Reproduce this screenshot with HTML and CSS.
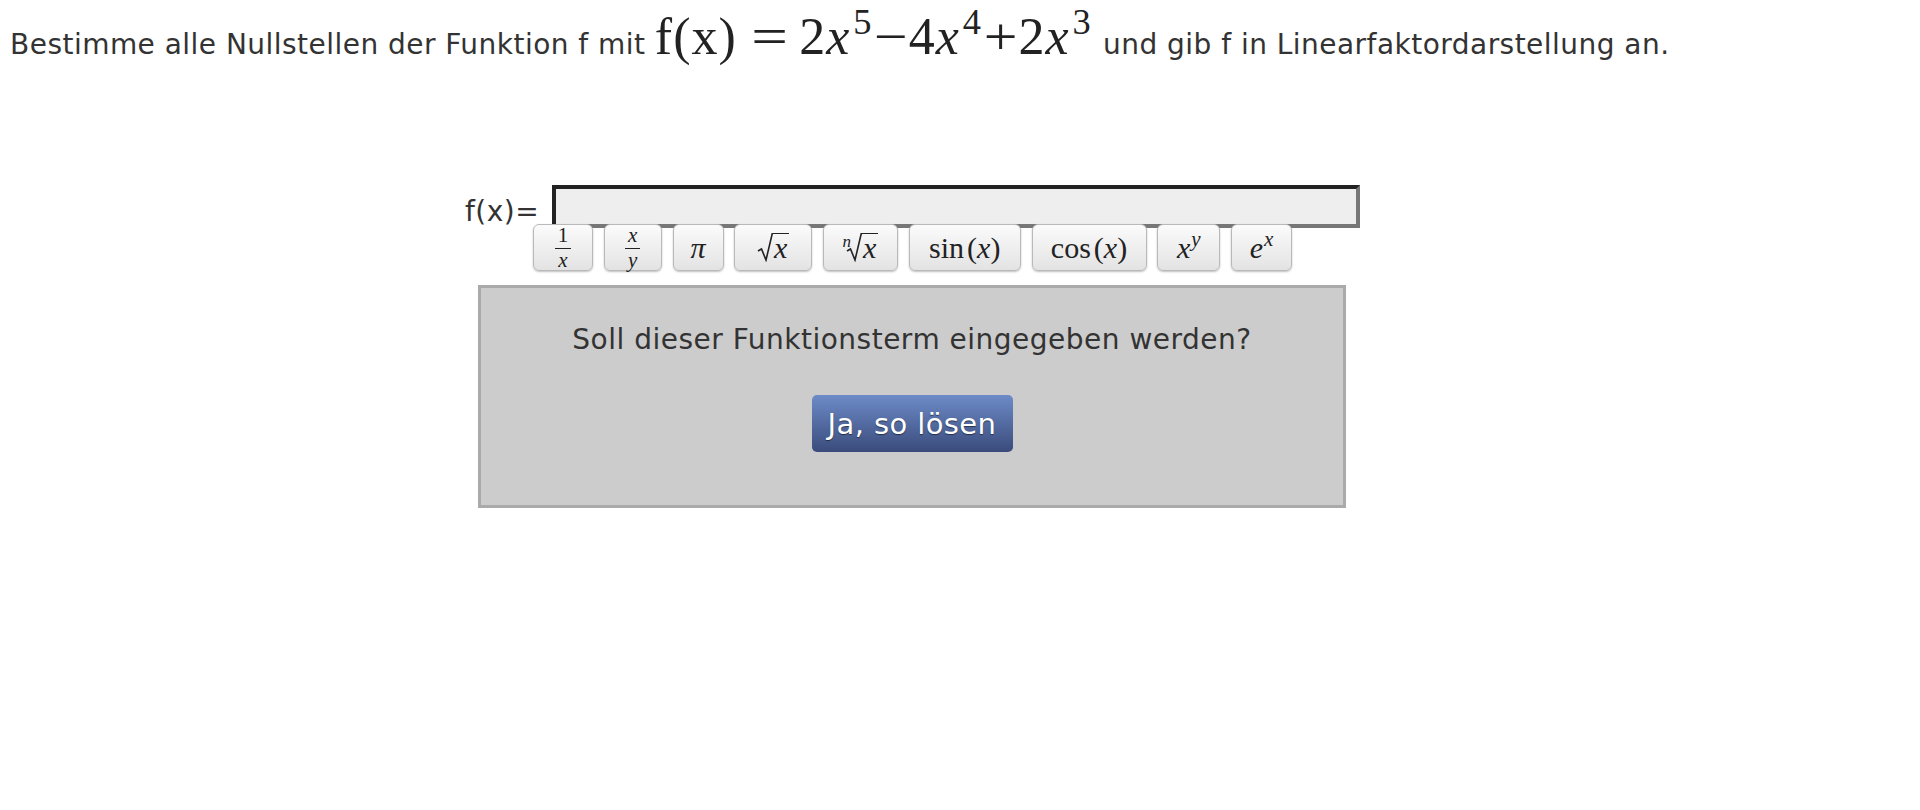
FILE: index.html
```html
<!DOCTYPE html>
<html lang="de">
<head>
<meta charset="utf-8">
<title>Nullstellen</title>
<link rel="stylesheet" href="styles.css">
</head>
<body>
<p class="task">Bestimme alle Nullstellen der Funktion f mit <span class="m hm"><span class="up">f(x)</span><span class="eq">=</span>2<i>x</i><sup>5</sup><span class="op">−</span>4<i>x</i><sup>4</sup><span class="op">+</span>2<i>x</i><sup>3</sup></span> und gib f in Linearfaktordarstellung an.</p>

<div class="solver">
  <div class="entry">
    <label class="fx-label" for="term">f(x)=</label>
    <input class="field" id="term" type="text">
  </div>
  <div class="keys">
    <button class="key key-frac1"><span class="m frac"><span class="num">1</span><span class="den"><i>x</i></span></span></button>
    <button class="key key-fracxy"><span class="m frac"><span class="num"><i>x</i></span><span class="den"><i>y</i></span></span></button>
    <button class="key key-pi"><span class="m"><i>π</i></span></button>
    <button class="key key-sqrt"><span class="m sqrt"><svg class="rad" width="16" height="29" viewBox="0 0 16 29"><path d="M1 18 L4.5 16 L9 27 L15.2 0.8 L16 0.8"/></svg><span class="rad-body"><i>x</i></span></span></button>
    <button class="key key-nroot"><span class="m sqrt"><i class="idx">n</i><svg class="rad" width="16" height="29" viewBox="0 0 16 29"><path d="M1 18 L4.5 16 L9 27 L15.2 0.8 L16 0.8"/></svg><span class="rad-body"><i>x</i></span></span></button>
    <button class="key key-sin"><span class="m">sin<span class="thin"></span>(<i>x</i>)</span></button>
    <button class="key key-cos"><span class="m">cos<span class="thin"></span>(<i>x</i>)</span></button>
    <button class="key key-pow"><span class="m"><i>x</i><sup><i>y</i></sup></span></button>
    <button class="key key-exp"><span class="m"><i>e</i><sup><i>x</i></sup></span></button>
  </div>
  <div class="confirm">
    <p class="confirm-q">Soll dieser Funktionsterm eingegeben werden?</p>
    <button class="solve-btn">Ja, so lösen</button>
  </div>
</div>
</body>
</html>
```

FILE: styles.css
```css
* { box-sizing: border-box; }

body {
  margin: 8px;
  background: #fff;
  color: #333;
  font-family: "DejaVu Sans", Verdana, sans-serif;
}

.task {
  margin: -1px 0 0;
  padding-left: 2px;
  font-size: 28px;
  letter-spacing: 0.47px;
}

.m {
  font-family: "Liberation Serif", "Times New Roman", serif;
  color: #222;
}

.m i { font-style: italic; }

.m sup {
  font-size: 0.7em;
  line-height: 0;
  vertical-align: 0.5em;
}

.hm {
  font-size: 52px;
  letter-spacing: 1px;
}

.hm sup {
  vertical-align: 0.56em;
  margin: 0 2px 0 3px;
}

.eq {
  display: inline-block;
  margin: 0 14px 0 18px;
  transform: scaleX(1.25);
}

.op {
  display: inline-block;
  transform: scaleX(1.15);
  margin: 0 2px;
}

.solver {
  margin: 119px 0 0 457px;
  width: 910px;
}

.entry {
  display: flex;
  align-items: flex-end;
  gap: 13px;
}

.fx-label {
  font-size: 28px;
  line-height: 33px;
  letter-spacing: 0.5px;
}

.field {
  width: 808px;
  height: 43px;
  margin: 0;
  background: #eee;
  border: 4px solid;
  border-color: #222 #777 #777 #222;
  outline: none;
}

.keys {
  display: flex;
  gap: 10.75px;
  margin: -4px 0 0 68px;
  position: relative;
}

.key {
  height: 47px;
  padding: 0;
  display: flex;
  align-items: center;
  justify-content: center;
  border: 1px solid #b9b9b9;
  border-radius: 6px;
  background: linear-gradient(#fbfbfb, #e3e3e3);
  box-shadow: 0 1px 2px rgba(0, 0, 0, 0.25);
  font-size: 30px;
  line-height: 1;
  color: #222;
}

.key-frac1 { width: 60px; }
.key-fracxy { width: 58px; }
.key-pi { width: 51px; }
.key-sqrt { width: 78px; }
.key-nroot { width: 75px; }
.key-sin { width: 112px; }
.key-cos { width: 115px; }
.key-pow { width: 63px; }
.key-exp { width: 61px; }

.key sup {
  vertical-align: 0.55em;
  margin-left: 1px;
}

.frac {
  display: inline-flex;
  flex-direction: column;
  align-items: stretch;
  font-size: 21px;
  text-align: center;
  margin-top: 1px;
}

.frac .num {
  line-height: 23.3px;
  padding: 0 3px;
  border-bottom: 1.5px solid #222;
}

.frac .den {
  line-height: 23.3px;
}

.thin { display: inline-block; width: 0.1em; }

.sqrt {
  display: inline-flex;
  align-items: flex-start;
}

.rad { display: block; }

.rad path {
  fill: none;
  stroke: #222;
  stroke-width: 1.6;
}

.rad-body {
  border-top: 1.6px solid #222;
  line-height: 27px;
  padding: 0 2px 0 1px;
}

.idx {
  font-size: 17px;
  line-height: 17px;
  margin: 0 -5px 0 0;
  position: relative;
}

.confirm {
  margin: 14px 0 0 13px;
  width: 868px;
  height: 223px;
  display: flex;
  flex-direction: column;
  align-items: center;
  background: #ccc;
  border: 3px solid #aaa;
}

.confirm-q {
  margin: 35px 0 0;
  font-size: 28px;
  line-height: 33px;
  letter-spacing: 0.5px;
}

.solve-btn {
  margin-top: 39px;
  width: 201px;
  height: 57px;
  border: 0;
  border-radius: 5px;
  background: linear-gradient(#6d8bc8, #3a4b7b);
  color: #fff;
  font-family: "DejaVu Sans", Verdana, sans-serif;
  font-size: 29px;
  letter-spacing: 0.4px;
  text-shadow: 0 1px 1px rgba(0, 0, 0, 0.5);
  cursor: pointer;
}
```
